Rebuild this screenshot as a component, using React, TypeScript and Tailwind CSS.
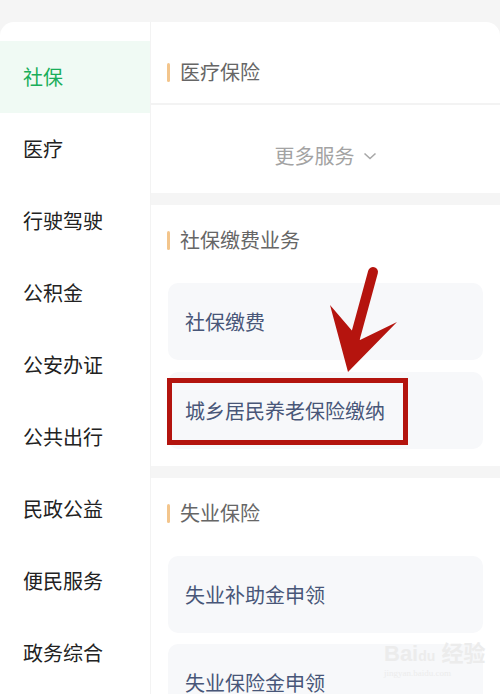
import React from "react";

const font = { fontFamily: '"Noto Sans CJK SC", "Noto Sans", sans-serif' };

const sideItems = ["社保", "医疗", "行驶驾驶", "公积金", "公安办证", "公共出行", "民政公益", "便民服务", "政务综合"];

function Title({ text }: { text: string }) {
  return (
    <div className="flex items-center h-[28px] pl-[16px]">
      <div className="w-[3px] h-[19px] bg-[#f3c58c] rounded-full mr-[10px]" />
      <span className="text-[20px] leading-[28px] text-[#666666]">{text}</span>
    </div>
  );
}

function Card({ text }: { text: string }) {
  return (
    <div className="mx-[17px] h-[77px] rounded-[10px] bg-[#f7f8fa] flex items-center pl-[17px]">
      <span className="text-[20px] leading-[28px] text-[#485678]">{text}</span>
    </div>
  );
}

export default function App() {
  return (
    <div className="w-[500px] h-[694px] overflow-hidden bg-[#f5f5f5] relative" style={font}>
      <div className="h-[22px]" />
      <div className="flex">
        <div className="w-[150px] bg-white rounded-tl-[14px] pt-[19px] h-[700px] shrink-0">
          {sideItems.map((s, i) => (
            <div
              key={s}
              className={
                i === 0
                  ? "h-[72px] flex items-center pl-[23px] bg-[#f0faf4] text-[#1aae5a] text-[20px]"
                  : "h-[72px] flex items-center pl-[23px] text-[#222222] text-[20px]"
              }
            >
              {s}
            </div>
          ))}
        </div>
        <div className="flex-1 flex flex-col gap-[12px] border-l border-[#f3f3f3]">
          <div className="bg-white rounded-tr-[14px] h-[171px] flex flex-col">
            <div className="pt-[36px] h-[83px] border-b-2 border-[#f3f3f3]">
              <Title text="医疗保险" />
            </div>
            <div className="flex-1 flex items-center justify-center pt-[14px]">
              <span className="text-[20px] text-[#a3a3a3]">更多服务</span>
              <svg width="14" height="10" viewBox="0 0 14 10" className="ml-[8px]">
                <path d="M1.5 2.5 L7 7.5 L12.5 2.5" fill="none" stroke="#a8a8a8" strokeWidth="1.6" />
              </svg>
            </div>
          </div>
          <div className="bg-white pt-[21px] pb-[17px]">
            <Title text="社保缴费业务" />
            <div className="h-[29px]" />
            <div className="flex flex-col gap-[12px]">
              <Card text="社保缴费" />
              <Card text="城乡居民养老保险缴纳" />
            </div>
          </div>
          <div className="bg-white pt-[21px] pb-[17px]">
            <Title text="失业保险" />
            <div className="h-[29px]" />
            <div className="flex flex-col gap-[11px]">
              <Card text="失业补助金申领" />
              <Card text="失业保险金申领" />
            </div>
          </div>
        </div>
      </div>

      {/* annotation box */}
      <div className="absolute left-[167px] top-[378px] w-[241px] h-[67px] border-[5px] border-[#b3140e]" />
      {/* annotation arrow */}
      <svg className="absolute left-0 top-0" width="500" height="694" viewBox="0 0 500 694">
        <path d="M373 272 L355 338" stroke="#b5140e" strokeWidth="10" strokeLinecap="round" fill="none" />
        <path d="M330 305 L348 372 L397 322 L360 340 Z" fill="#b5140e" />
      </svg>
      {/* watermark */}
      <div className="absolute left-[384px] top-[640px] flex flex-col items-start">
        <span className="text-[22px] leading-[22px] text-[#ececec] font-bold" style={{ fontFamily: '"Liberation Sans", sans-serif' }}>
          Bai<span className="text-[14px]">du</span> <span style={font}>经验</span>
        </span>
        <span className="text-[9px] leading-[12px] text-[#ececec]" style={{ fontFamily: '"Liberation Serif", serif' }}>
          jingyan.baidu.com
        </span>
      </div>
    </div>
  );
}
